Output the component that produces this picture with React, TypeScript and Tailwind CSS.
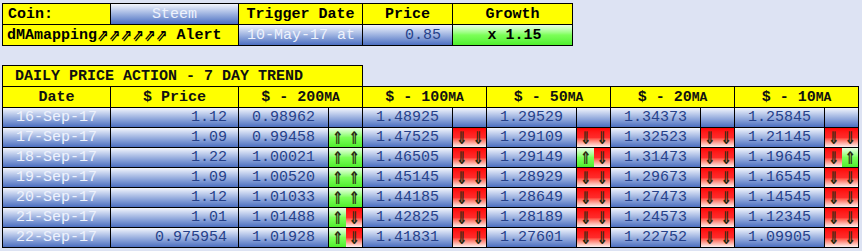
const mono = "font-['Liberation_Mono','Courier_New',monospace]";

const blue = "bg-linear-to-b from-[#f4f6fc] to-[#4d6fc0]";
const red = "bg-linear-to-b from-[#ff0000] via-[#ff2a2a] to-[#fff0f0]";
const green = "bg-linear-to-b from-[#eaffe4] via-[#7cff58] to-[#4eef2c]";
const yellow = "bg-[#ffff00]";

type Sig = "" | "UU" | "DD" | "UD" | "DU";

const rows: { date: string; price: string; ma: [string, Sig][] }[] = [
  { date: "16-Sep-17", price: "1.12", ma: [["0.98962", ""], ["1.48925", ""], ["1.29529", ""], ["1.34373", ""], ["1.25845", ""]] },
  { date: "17-Sep-17", price: "1.09", ma: [["0.99458", "UU"], ["1.47525", "DD"], ["1.29109", "DD"], ["1.32523", "DD"], ["1.21145", "DD"]] },
  { date: "18-Sep-17", price: "1.22", ma: [["1.00021", "UU"], ["1.46505", "DD"], ["1.29149", "UD"], ["1.31473", "DD"], ["1.19645", "DU"]] },
  { date: "19-Sep-17", price: "1.09", ma: [["1.00520", "UU"], ["1.45145", "DD"], ["1.28929", "DD"], ["1.29673", "DD"], ["1.16545", "DD"]] },
  { date: "20-Sep-17", price: "1.12", ma: [["1.01033", "UU"], ["1.44185", "DD"], ["1.28649", "DD"], ["1.27473", "DD"], ["1.14545", "DD"]] },
  { date: "21-Sep-17", price: "1.01", ma: [["1.01488", "UD"], ["1.42825", "DD"], ["1.28189", "DD"], ["1.24573", "DD"], ["1.12345", "DD"]] },
  { date: "22-Sep-17", price: "0.975954", ma: [["1.01928", "UD"], ["1.41831", "DD"], ["1.27601", "DD"], ["1.22752", "DD"], ["1.09905", "DD"]] },
];

const cell = "flex items-center border-r border-b border-black";

function Half({ up, w }: { up: boolean; w: string }) {
  return (
    <div className={`${w} h-full flex items-center justify-center ${up ? green : red}`}>
      <span className="inline-block scale-y-[1.25] font-['DejaVu_Sans',sans-serif] text-[14px] font-bold leading-none text-[#2a2a10]">
        {up ? "⇑" : "⇓"}
      </span>
    </div>
  );
}

function Signal({ sig }: { sig: Sig }) {
  if (!sig) return <div className={`${cell} w-[34px] h-full ${blue}`} />;
  return (
    <div className={`${cell} w-[34px] h-full`}>
      <Half up={sig[0] === "U"} w="w-[17px]" />
      <Half up={sig[1] === "U"} w="w-[16px]" />
    </div>
  );
}

export default function App() {
  return (
    <div className={`min-h-screen w-[862px] bg-[#dde3f3] pt-[3px] pl-[2px] text-[15px] leading-none ${mono}`}>
      {/* top summary */}
      <div className="w-[571px] border-l border-t border-black">
        <div className="flex h-[21px]">
          <div className={`${cell} ${yellow} w-[108px] pl-[5px] font-bold text-black`}>Coin:</div>
          <div className={`${cell} ${blue} w-[128px] justify-center text-[#eef2fc]`}>Steem</div>
          <div className={`${cell} ${yellow} w-[124px] justify-center font-bold text-black`}>Trigger Date</div>
          <div className={`${cell} ${yellow} w-[90px] justify-center font-bold text-black`}>Price</div>
          <div className={`${cell} ${yellow} w-[120px] justify-center font-bold text-black`}>Growth</div>
        </div>
        <div className="flex h-[21px]">
          <div className={`${cell} ${yellow} w-[236px] pl-[4px] font-bold text-black whitespace-nowrap`}>
            dMAmapping
            <span className="inline-block scale-y-[1.2] font-['DejaVu_Sans',sans-serif] text-[14px] font-bold">⇗⇗⇗⇗⇗⇗</span>
            &nbsp;Alert
          </div>
          <div className={`${cell} ${blue} w-[124px] justify-end pr-[7px] text-[#eef2fc]`}>10-May-17 at</div>
          <div className={`${cell} ${blue} w-[90px] justify-end pr-[11px] text-[#26418a]`}>0.85</div>
          <div className={`${cell} ${green} w-[120px] justify-center pl-[4px] font-bold text-black`}>x 1.15</div>
        </div>
      </div>

      {/* daily trend */}
      <div className="mt-[19px]">
        <div className={`w-[361px] h-[21px] border-l border-t border-r border-black ${yellow} flex items-center pl-[12px] font-bold text-[#111]`}>
          DAILY PRICE ACTION - 7 DAY TREND
        </div>
        <div className="w-[857px] border-l border-t border-black">
          <div className={`flex h-[21px] ${yellow} font-bold text-[#111]`}>
            <div className={`${cell} w-[108px] justify-center`}>Date</div>
            <div className={`${cell} w-[128px] justify-center`}>$ Price</div>
            {["200", "100", "50", "20", "10"].map((n) => (
              <div key={n} className={`${cell} w-[124px] justify-center whitespace-pre`}>
                {`$ - ${n}`}
                <span className="text-[13px]">MA</span>
              </div>
            ))}
          </div>
          {rows.map((r) => (
            <div key={r.date} className="flex h-[20px]">
              <div className={`${cell} ${blue} w-[108px] justify-center text-[#eef2fc]`}>{r.date}</div>
              <div className={`${cell} ${blue} w-[128px] justify-end pr-[11px] text-[#26418a]`}>{r.price}</div>
              {r.ma.map(([v, s], i) => (
                <div key={i} className="flex h-full">
                  <div className={`${cell} ${blue} w-[90px] justify-center text-[#26418a]`}>{v}</div>
                  <Signal sig={s} />
                </div>
              ))}
            </div>
          ))}
        </div>
      </div>
    </div>
  );
}
